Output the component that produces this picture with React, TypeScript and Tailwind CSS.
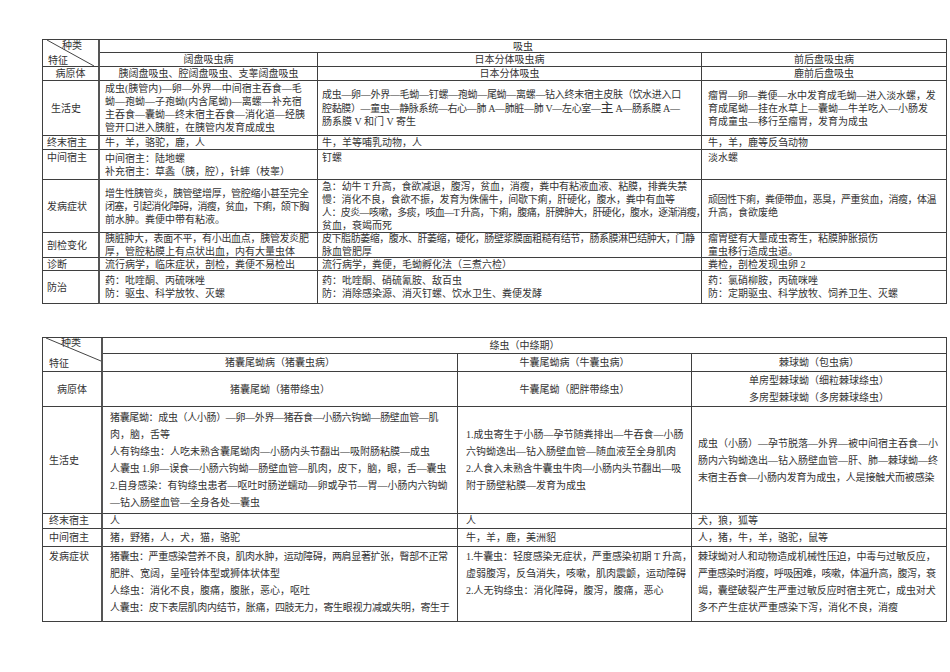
import React from "react";

const FONT = "font-['Liberation_Serif','Noto_Sans_CJK_SC',serif]";
const C = "border-r border-b border-[#3f3f3f] flex flex-col justify-center min-w-0";
const CT = "border-r border-b border-[#3f3f3f] flex flex-col justify-start min-w-0";
const LC = "border-r-2 border-b border-r-[#555] border-b-[#3f3f3f] flex flex-col justify-center min-w-0";
const LCT = "border-r-2 border-b border-r-[#555] border-b-[#3f3f3f] flex flex-col justify-start min-w-0";

type Line = React.ReactNode | { t: React.ReactNode; c: string };

function L({ lines }: { lines: Line[] }) {
  return (
    <>
      {lines.map((l, i) => {
        if (l && typeof l === "object" && "t" in (l as object)) {
          const o = l as { t: React.ReactNode; c: string };
          return (
            <div key={i} className={`whitespace-nowrap ${o.c}`}>
              {o.t}
            </div>
          );
        }
        return (
          <div key={i} className="whitespace-nowrap">
            {l as React.ReactNode}
          </div>
        );
      })}
    </>
  );
}

function TopTable() {
  return (
    <div className="grid grid-cols-[57px_218px_384px_245px] grid-rows-[13px_14px_14px_55px_14px_30px_53px_25px_13px_33px] border-t border-l border-[#3f3f3f] w-[905px] text-[10px] leading-[13px]">
      <div className="row-span-2 relative border-r-2 border-b border-r-[#555] border-b-[#3f3f3f]">
        <svg className="absolute inset-0 w-full h-full" viewBox="0 0 55 26" preserveAspectRatio="none">
          <line x1="4" y1="0" x2="51" y2="26" stroke="#444" strokeWidth="1" vectorEffect="non-scaling-stroke" />
        </svg>
        <span className="absolute left-[19px] top-[-1px] leading-[13px]">种类</span>
        <span className="absolute left-[5px] top-[14px] leading-[13px]">特征</span>
      </div>
      <div className={`${C} col-span-3 items-center`}>吸虫</div>
      <div className={`${C} items-center`}>阔盘吸虫病</div>
      <div className={`${C} items-center`}>日本分体吸虫病</div>
      <div className={`${C} items-center`}>前后盘吸虫病</div>

      <div className={`${LC} items-center`}>病原体</div>
      <div className={`${C} items-center`}>胰阔盘吸虫、腔阔盘吸虫、支睾阔盘吸虫</div>
      <div className={`${C} items-center`}>日本分体吸虫</div>
      <div className={`${C} items-center`}>鹿前后盘吸虫</div>

      <div className={`${LC} pl-[8px]`}>生活史</div>
      <div className={`${C} pl-[5px]`}>
        <L
          lines={[
            "成虫(胰管内)—卵—外界—中间宿主吞食—毛",
            "蚴—孢蚴—子孢蚴(内含尾蚴)—离螺—补充宿",
            "主吞食—囊蚴—终末宿主吞食—消化道—经胰",
            "管开口进入胰脏，在胰管内发育成成虫",
          ]}
        />
      </div>
      <div className={`${C} pl-[4px]`}>
        <L
          lines={[
            { t: "成虫—卵—外界—毛蚴—钉螺—孢蚴—尾蚴—离螺—钻入终末宿主皮肤（饮水进入口", c: "tracking-[-0.3px]" },
            {
              t: (
                <>
                  腔黏膜）—童虫—静脉系统—右心—肺 A—肺脏—肺 V—左心室—<span className="text-[13px]">主</span> A—肠系膜 A—
                </>
              ),
              c: "tracking-[-0.35px]",
            },
            "肠系膜 V 和门 V 寄生",
          ]}
        />
      </div>
      <div className={`${C} pl-[6px]`}>
        <L
          lines={[
            { t: "瘤胃—卵—粪便—水中发育成毛蚴—进入淡水螺，发", c: "tracking-[-0.1px]" },
            "育成尾蚴—挂在水草上—囊蚴—牛羊吃入—小肠发",
            "育成童虫—移行至瘤胃，发育为成虫",
          ]}
        />
      </div>

      <div className={`${LC} pl-[4px]`}>终末宿主</div>
      <div className={`${C} pl-[5px]`}>牛，羊，骆驼，鹿，人</div>
      <div className={`${C} pl-[4px]`}>牛，羊等哺乳动物，人</div>
      <div className={`${C} pl-[6px]`}>牛，羊，鹿等反刍动物</div>

      <div className={`${LCT} pl-[4px] pt-[1px]`}>中间宿主</div>
      <div className={`${C} pl-[5px]`}>
        <L lines={["中间宿主：陆地螺", "补充宿主：草螽（胰，腔），针蟀（枝睾）"]} />
      </div>
      <div className={`${CT} pl-[4px] pt-[1px]`}>钉螺</div>
      <div className={`${CT} pl-[6px] pt-[1px]`}>淡水螺</div>

      <div className={`${LC} pl-[4px]`}>发病症状</div>
      <div className={`${C} pl-[5px]`}>
        <L
          lines={[
            { t: "增生性胰管炎，胰管壁增厚，管腔缩小甚至完全", c: "tracking-[-0.3px]" },
            { t: "闭塞，引起消化障碍，消瘦，贫血，下痢，颌下胸", c: "tracking-[-0.75px]" },
            "前水肿。粪便中带有粘液。",
          ]}
        />
      </div>
      <div className={`${C} pl-[4px]`}>
        <L
          lines={[
            { t: "急：幼牛 T 升高，食欲减退，腹泻，贫血，消瘦，粪中有粘液血液、粘膜，排粪失禁", c: "tracking-[-0.15px]" },
            { t: "慢：消化不良，食欲不振，发育为侏儒牛，间歇下痢，肝硬化，腹水，粪中有血等", c: "tracking-[-0.2px]" },
            { t: "人：皮炎—咳嗽，多痰，咳血—T 升高，下痢，腹痛，肝脾肿大，肝硬化，腹水，逐渐消瘦，", c: "tracking-[-0.6px]" },
            "贫血，衰竭而死",
          ]}
        />
      </div>
      <div className={`${C} pl-[6px]`}>
        <L lines={[{ t: "顽固性下痢，粪便带血，恶臭，严重贫血，消瘦，体温", c: "tracking-[-0.5px]" }, "升高，食欲废绝"]} />
      </div>

      <div className={`${LC} pl-[4px]`}>剖检变化</div>
      <div className={`${C} pl-[5px]`}>
        <L
          lines={[
            { t: "胰脏肿大，表面不平，有小出血点，胰管发炎肥", c: "tracking-[-0.3px]" },
            "厚，管腔粘膜上有点状出血，内有大量虫体",
          ]}
        />
      </div>
      <div className={`${C} pl-[4px]`}>
        <L
          lines={[
            { t: "皮下脂肪萎缩，腹水、肝萎缩，硬化，肠壁浆膜面粗糙有结节，肠系膜淋巴结肿大，门静", c: "tracking-[-0.45px]" },
            "脉血管肥厚",
          ]}
        />
      </div>
      <div className={`${C} pl-[6px]`}>
        <L lines={["瘤胃壁有大量成虫寄生，粘膜肿胀损伤", "童虫移行造成虫道。"]} />
      </div>

      <div className={`${LC} pl-[4px]`}>诊断</div>
      <div className={`${C} pl-[5px]`}>流行病学，临床症状，剖检，粪便不易检出</div>
      <div className={`${C} pl-[4px]`}>流行病学，粪便，毛蚴孵化法（三煮六检）</div>
      <div className={`${C} pl-[6px]`}>粪检，剖检发现虫卵 2</div>

      <div className={`${LC} pl-[4px]`}>防治</div>
      <div className={`${C} pl-[5px]`}>
        <L lines={["药：吡喹酮、丙硫咪唑", "防：驱虫、科学放牧、灭螺"]} />
      </div>
      <div className={`${C} pl-[4px]`}>
        <L lines={["药：吡喹酮、硝硫氰胺、敌百虫", "防：消除感染源、消灭钉螺、饮水卫生、粪便发酵"]} />
      </div>
      <div className={`${C} pl-[6px]`}>
        <L lines={["药：氯硝柳胺，丙硫咪唑", "防：定期驱虫、科学放牧、饲养卫生、灭螺"]} />
      </div>
    </div>
  );
}

function BottomTable() {
  return (
    <div className="grid grid-cols-[60px_355px_234px_255px] grid-rows-[16px_18px_35px_107px_15px_18px_75px] border-t border-l border-[#3f3f3f] w-[905px] text-[10px] leading-[17px]">
      <div className="row-span-2 relative border-r-2 border-b border-r-[#555] border-b-[#3f3f3f]">
        <svg className="absolute inset-0 w-full h-full" viewBox="0 0 58 33" preserveAspectRatio="none">
          <line x1="3" y1="0" x2="58" y2="23" stroke="#444" strokeWidth="1" vectorEffect="non-scaling-stroke" />
        </svg>
        <span className="absolute left-[18px] top-[-2px] leading-[13px]">种类</span>
        <span className="absolute left-[6px] top-[19px] leading-[13px]">特征</span>
      </div>
      <div className={`${C} col-span-3 items-center`}>绦虫（中绦期）</div>
      <div className={`${C} items-center`}>猪囊尾蚴病（猪囊虫病）</div>
      <div className={`${C} items-center`}>牛囊尾蚴病（牛囊虫病）</div>
      <div className={`${C} items-center`}>棘球蚴（包虫病）</div>

      <div className={`${LC} items-center`}>病原体</div>
      <div className={`${C} items-center`}>猪囊尾蚴（猪带绦虫）</div>
      <div className={`${C} items-center`}>牛囊尾蚴（肥胖带绦虫）</div>
      <div className={`${C} items-center`}>
        <L lines={["单房型棘球蚴（细粒棘球绦虫）", "多房型棘球蚴（多房棘球绦虫）"]} />
      </div>

      <div className={`${LC} pl-[6px]`}>生活史</div>
      <div className={`${C} pl-[7px]`}>
        <L
          lines={[
            { t: "猪囊尾蚴：成虫（人小肠）—卵—外界—猪吞食—小肠六钩蚴—肠壁血管—肌", c: "tracking-[-0.35px]" },
            "肉，脑，舌等",
            "人有钩绦虫：人吃未熟含囊尾蚴肉—小肠内头节翻出—吸附肠粘膜—成虫",
            { t: "人囊虫 1.卵—误食—小肠六钩蚴—肠壁血管—肌肉，皮下，脑，眼，舌—囊虫", c: "tracking-[-0.1px]" },
            "2.自身感染：有钩绦虫患者—呕吐时肠逆蠕动—卵或孕节—胃—小肠内六钩蚴",
            "—钻入肠壁血管—全身各处—囊虫",
          ]}
        />
      </div>
      <div className={`${C} pl-[8px]`}>
        <L
          lines={[
            "1.成虫寄生于小肠—孕节随粪排出—牛吞食—小肠",
            "六钩蚴逸出—钻入肠壁血管—随血液至全身肌肉",
            { t: "2.人食入未熟含牛囊虫牛肉—小肠内头节翻出—吸", c: "tracking-[-0.1px]" },
            "附于肠壁粘膜—发育为成虫",
          ]}
        />
      </div>
      <div className={`${C} pl-[6px]`}>
        <L
          lines={[
            "成虫（小肠）—孕节脱落—外界—被中间宿主吞食—小",
            "肠内六钩蚴逸出—钻入肠壁血管—肝、肺—棘球蚴—终",
            { t: "末宿主吞食—小肠内发育为成虫，人是接触犬而被感染", c: "tracking-[-0.15px]" },
          ]}
        />
      </div>

      <div className={`${LC} pl-[6px] leading-[14px]`}>终末宿主</div>
      <div className={`${C} pl-[7px] leading-[14px]`}>人</div>
      <div className={`${C} pl-[8px] leading-[14px]`}>人</div>
      <div className={`${C} pl-[6px] leading-[14px]`}>犬，狼，狐等</div>

      <div className={`${LC} pl-[6px]`}>中间宿主</div>
      <div className={`${C} pl-[7px]`}>猪，野猪，人，犬，猫，骆驼</div>
      <div className={`${C} pl-[8px]`}>牛，羊，鹿，美洲貂</div>
      <div className={`${C} pl-[6px]`}>人，猪，牛，羊，骆驼，鼠等</div>

      <div className={`${LCT} pl-[6px] pt-[1px]`}>发病症状</div>
      <div className={`${CT} pl-[7px] pt-[1px]`}>
        <L
          lines={[
            { t: "猪囊虫：严重感染营养不良，肌肉水肿，运动障碍，两肩显著扩张，臀部不正常", c: "tracking-[-0.35px]" },
            "肥胖、宽阔，呈哑铃体型或狮体状体型",
            "人绦虫：消化不良，腹痛，腹胀，恶心，呕吐",
            { t: "人囊虫：皮下表层肌肉内结节，胀痛，四肢无力，寄生眼视力减或失明，寄生于", c: "tracking-[-0.3px]" },
          ]}
        />
      </div>
      <div className={`${CT} pl-[8px] pt-[1px]`}>
        <L
          lines={[
            { t: "1.牛囊虫：轻度感染无症状，严重感染初期 T 升高，", c: "tracking-[-0.1px]" },
            "虚弱腹泻，反刍消失，咳嗽，肌肉震颤，运动障碍",
            "2.人无钩绦虫：消化障碍，腹泻，腹痛，恶心",
          ]}
        />
      </div>
      <div className={`${CT} pl-[6px] pt-[1px]`}>
        <L
          lines={[
            { t: "棘球蚴对人和动物造成机械性压迫，中毒与过敏反应，", c: "tracking-[-0.1px]" },
            { t: "严重感染时消瘦，呼吸困难，咳嗽，体温升高，腹泻，衰", c: "tracking-[-0.5px]" },
            { t: "竭，囊壁破裂产生严重过敏反应时宿主死亡，成虫对犬", c: "tracking-[-0.1px]" },
            "多不产生症状严重感染下泻，消化不良，消瘦",
          ]}
        />
      </div>
    </div>
  );
}

export default function App() {
  return (
    <div className={`w-[950px] h-[672px] bg-white overflow-hidden text-[#333] ${FONT}`}>
      <div className="pt-[39px] pl-[42px] flex flex-col gap-[33px]">
        <TopTable />
        <BottomTable />
      </div>
    </div>
  );
}
